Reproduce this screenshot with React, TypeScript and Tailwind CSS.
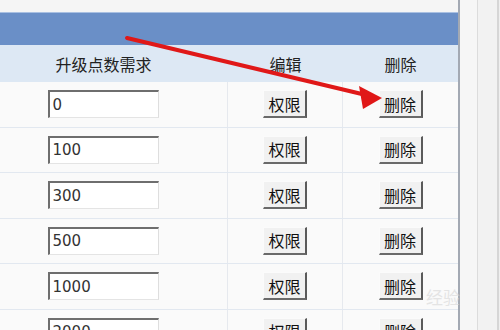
import React from "react";

const values = ["0", "100", "300", "500", "1000", "2000"];

const cjk = { fontFamily: '"Noto Sans CJK SC", "Noto Sans", sans-serif' } as const;

function Btn({ label }: { label: string }) {
  return (
    <div
      className="w-[44px] h-[28px] flex items-center justify-center bg-[#f1f1f1] border-t border-l border-t-[#fbfbfb] border-l-[#fbfbfb] border-r-2 border-b-2 border-r-[#5a5a5a] border-b-[#6a6a6a] text-[16px] text-[#111] leading-none"
      style={cjk}
    >
      {label}
    </div>
  );
}

export default function App() {
  return (
    <div className="relative w-[500px] h-[330px] overflow-hidden bg-[#f4f4f4]">
      <div className="flex h-full">
        <div className="w-[458px] flex flex-col">
          <div className="h-[12px] shrink-0 bg-[#f5f5f5]" />
          <div className="h-[33px] shrink-0 bg-[#6a8fc7] border-t border-t-[#a9c0e2]" />
          <div className="h-[37px] shrink-0 bg-[#dde8f4] grid grid-cols-[228px_115px_115px] items-center text-[16px] text-[#222]" style={cjk}>
            <div className="flex justify-center pr-[21px]">升级点数需求</div>
            <div className="flex justify-center">编辑</div>
            <div className="flex justify-center">删除</div>
          </div>
          {values.map((v) => (
            <div
              key={v}
              className="h-[45.5px] shrink-0 bg-[#fafafa] grid grid-cols-[228px_115px_115px] border-b border-b-[#e2e8f0]"
            >
              <div className="flex items-center justify-center pr-[21px] border-r border-r-[#e6e9ee]">
                <div
                  className="w-[111px] h-[28px] bg-white border-t-2 border-l-2 border-t-[#6e6e6e] border-l-[#6e6e6e] border-r border-b border-r-[#dedede] border-b-[#e4e4e4] flex items-center pl-[3px] text-[15px] text-[#333]"
                  style={{ fontFamily: '"DejaVu Sans", Verdana, sans-serif' }}
                >
                  {v}
                </div>
              </div>
              <div className="flex items-center justify-center border-r border-r-[#e6e9ee]">
                <Btn label="权限" />
              </div>
              <div className="flex items-center justify-center">
                <Btn label="删除" />
              </div>
            </div>
          ))}
        </div>
        <div className="w-[2px] shrink-0 bg-[#a3a9b3]" />
        <div className="w-[17px] shrink-0 bg-[#f6f6f6]" />
        <div className="w-[1px] shrink-0 bg-[#dcdcdc]" />
        <div className="w-[19px] shrink-0 bg-[#f2f2f2]" />
        <div className="w-[2px] shrink-0 bg-[#d6d6d6]" />
        <div className="flex-1 bg-[#efefef]" />
      </div>

      <div
        className="absolute left-[426px] top-[288px] text-[17px] text-[#d6d6d6] opacity-60 leading-none"
        style={cjk}
      >
        经验
      </div>

      <svg className="absolute left-0 top-0 pointer-events-none" width="500" height="330" viewBox="0 0 500 330">
        <line x1="127" y1="38" x2="366" y2="95" stroke="#e01818" strokeWidth="4" strokeLinecap="round" />
        <polygon points="382,98 359,86 363,109" fill="#e01818" />
      </svg>
    </div>
  );
}
